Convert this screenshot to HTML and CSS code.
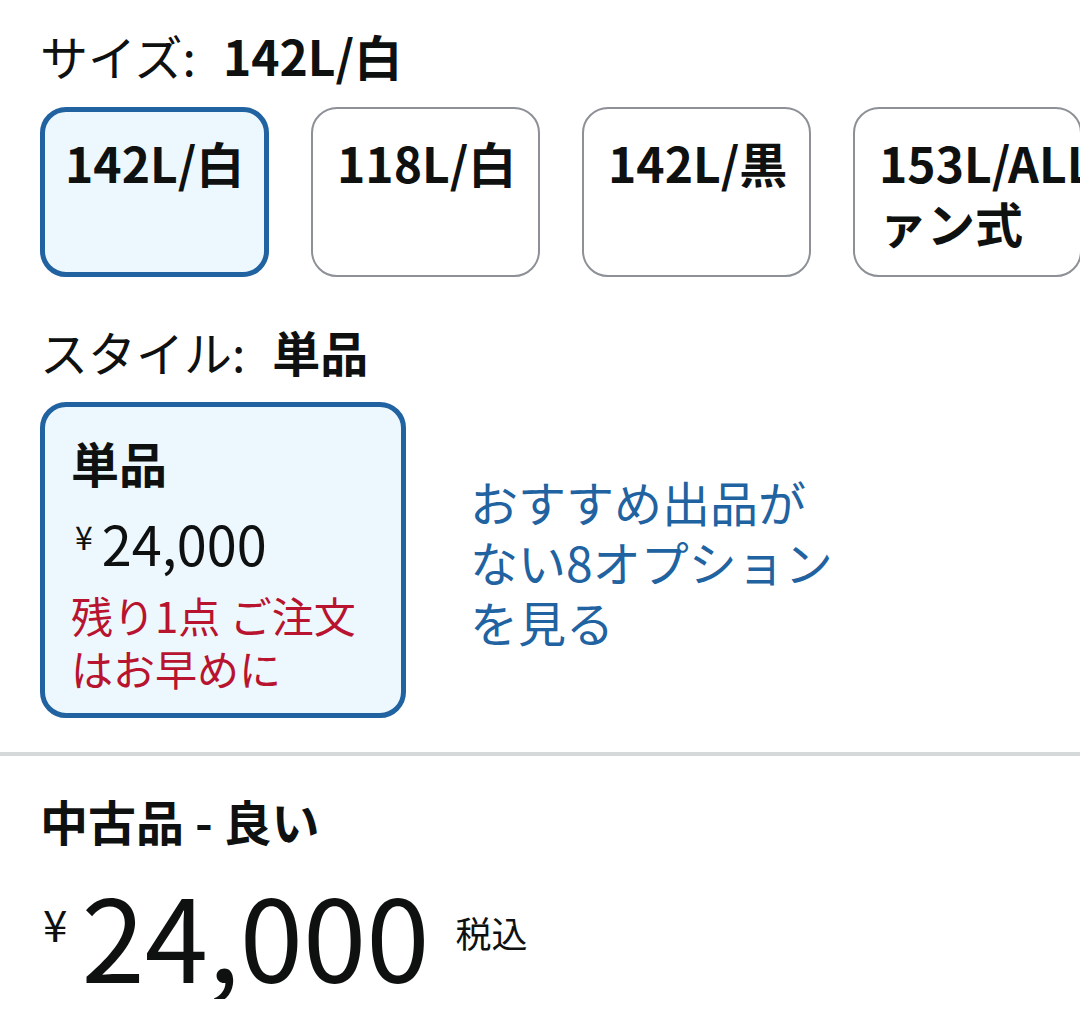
FILE: index.html
```html
<!DOCTYPE html>
<html lang="ja">
<head>
  <meta charset="UTF-8">
  <meta name="viewport" content="width=device-width, initial-scale=1.0">
  <title>サイズ・スタイル選択</title>
  <link rel="stylesheet" href="styles.css">
</head>
<body>
  <section class="variation">
    <p class="variation-label">サイズ:<strong>142L/白</strong></p>
    <div class="swatch-row">
      <div class="swatch selected">142L/白</div>
      <div class="swatch">118L/白</div>
      <div class="swatch">142L/黒</div>
      <div class="swatch wrap"><span class="nowrap">153L/ALLフ</span>ァン式</div>
    </div>
  </section>

  <section class="variation">
    <p class="variation-label style-label">スタイル:<strong>単品</strong></p>
    <div class="style-row">
      <div class="style-card selected">
        <div class="style-name">単品</div>
        <div class="style-price"><span class="yen">¥</span>24,000</div>
        <div class="stock">残り1点 ご注文はお早めに</div>
      </div>
      <a class="more-link" href="#">おすすめ出品が<br>ない8オプション<br>を見る</a>
    </div>
  </section>

  <hr class="divider">

  <section class="offer">
    <h2 class="condition">中古品 - 良い</h2>
    <div class="price">
      <span class="price-yen">¥</span><span class="price-whole">24,000</span><span class="tax">税込</span>
    </div>
  </section>
</body>
</html>
```

FILE: styles.css
```css
body {
  margin: 0;
  font-family: "Noto Sans CJK JP", "Noto Sans", sans-serif;
  color: #0f1111;
  background-color: #fff;
  overflow: hidden;
}
.variation {
  padding-left: 40px;
}
.variation-label {
  margin: 0;
  padding-top: 25px;
  font-size: 48px;
  line-height: 60px;
}
.variation-label strong {
  margin-left: 27px;
}
.style-label {
  padding-top: 44px;
}
.swatch-row {
  display: flex;
  gap: 42px;
  margin-top: 22px;
}
.swatch {
  flex: none;
  box-sizing: border-box;
  width: 229px;
  height: 170px;
  padding: 23px 24px 0;
  border: 2px solid #8d9096;
  border-radius: 26px;
  font-size: 48px;
  font-weight: 700;
  line-height: 60px;
  white-space: nowrap;
}
.swatch.wrap {
  white-space: normal;
}
.swatch.selected {
  border: 5px solid #2162a1;
  background-color: #edf8fe;
  padding: 20px 20px 0;
}
.nowrap {
  white-space: nowrap;
}
.style-row {
  display: flex;
  align-items: center;
  gap: 64px;
  margin-top: 21px;
}
.style-card {
  flex: none;
  box-sizing: border-box;
  width: 366px;
  height: 316px;
  padding: 25px 26px 0;
  border: 5px solid #2162a1;
  border-radius: 26px;
  background-color: #edf8fe;
}
.style-name {
  font-size: 48px;
  font-weight: 700;
  line-height: 60px;
}
.style-price {
  margin-top: 14px;
  font-size: 54px;
  line-height: 60px;
}
.yen {
  margin: 0 9px 0 4px;
  font-size: 32px;
  vertical-align: 16px;
}
.stock {
  margin-top: 15px;
  color: #b8132f;
  font-size: 42px;
  line-height: 53px;
}
.more-link {
  margin-top: 2px;
  color: #2162a1;
  text-decoration: none;
  font-size: 48px;
  line-height: 60px;
}
.divider {
  margin: 34px 0 0;
  border: 0;
  height: 4px;
  background-color: #d5d9d9;
}
.offer {
  padding-left: 40px;
}
.condition {
  margin: 0;
  padding-top: 34px;
  font-size: 48px;
  line-height: 60px;
}
.price {
  display: flex;
  align-items: flex-start;
  margin-top: 19px;
}
.price-yen {
  margin: 24px 14px 0 3px;
  font-size: 44px;
  line-height: 60px;
}
.price-whole {
  font-size: 114px;
  line-height: 130px;
}
.tax {
  margin: 38px 0 0 26px;
  font-size: 36px;
  line-height: 50px;
}
```
